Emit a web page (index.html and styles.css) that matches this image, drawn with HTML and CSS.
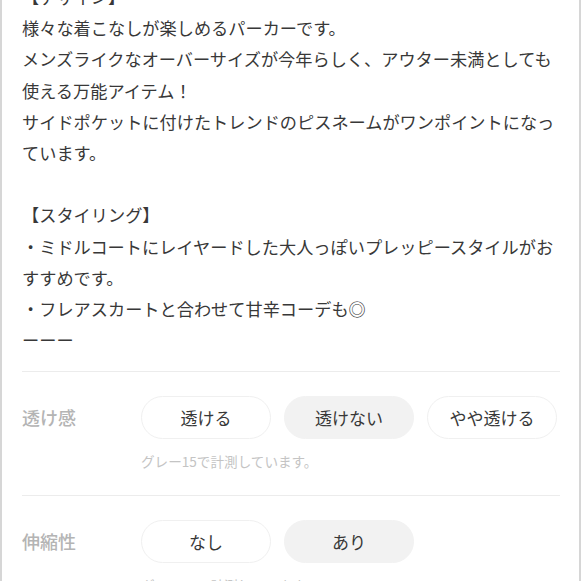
FILE: index.html
```html
<!DOCTYPE html>
<html lang="ja">
<head>
<meta charset="utf-8">
<link rel="stylesheet" href="styles.css">
</head>
<body>
<div class="panel">
  <div class="desc">
    <p>【デザイン】</p>
    <p>様々な着こなしが楽しめるパーカーです。</p>
    <p>メンズライクなオーバーサイズが今年らしく、アウター未満としても使える万能アイテム！</p>
    <p>サイドポケットに付けたトレンドのピスネームがワンポイントになっています。</p>
    <p class="blank">&nbsp;</p>
    <p>【スタイリング】</p>
    <p>・ミドルコートにレイヤードした大人っぽいプレッピースタイルがおすすめです。</p>
    <p>・フレアスカートと合わせて甘辛コーデも◎</p>
    <p>ーーー</p>
  </div>
  <div class="spec">
    <div class="spec-label">透け感</div>
    <div class="spec-body">
      <div class="pills">
        <span class="pill">透ける</span>
        <span class="pill is-on">透けない</span>
        <span class="pill">やや透ける</span>
      </div>
      <p class="note">グレー15で計測しています。</p>
    </div>
  </div>
  <div class="spec">
    <div class="spec-label">伸縮性</div>
    <div class="spec-body">
      <div class="pills">
        <span class="pill">なし</span>
        <span class="pill is-on">あり</span>
      </div>
      <p class="note">グレー15で計測しています。</p>
    </div>
  </div>
</div>
</body>
</html>
```
FILE: styles.css
```css
html, body {
  margin: 0;
  padding: 0;
  background: #ffffff;
  overflow: hidden;
}
body {
  font-family: "Noto Sans CJK JP", "Noto Sans", sans-serif;
  color: #383838;
}
.panel {
  box-sizing: border-box;
  width: 581px;
  height: 581px;
  border-left: 2px solid #d6d6d6;
  border-right: 2px solid #d6d6d6;
  padding: 0 19px 0 20px;
  overflow: hidden;
}
.desc {
  margin-top: -19px;
  font-size: 17.2px;
  line-height: 31.2px;
  padding-bottom: 16px;
  border-bottom: 1px solid #ececec;
}
.desc p {
  margin: 0;
}
.spec {
  display: flex;
  padding: 24px 0 24px;
  border-bottom: 1px solid #ececec;
}
.spec-label {
  width: 119px;
  flex: none;
  height: 43px;
  line-height: 43px;
  font-size: 18px;
  font-weight: 500;
  color: #b4b4b4;
}
.spec-body {
  display: flex;
  flex-direction: column;
}
.pills {
  display: flex;
  gap: 13px;
}
.pill {
  box-sizing: border-box;
  width: 130px;
  height: 43px;
  border-radius: 22px;
  border: 1px solid #f0f0f0;
  background: #ffffff;
  display: flex;
  align-items: center;
  justify-content: center;
  font-size: 17px;
  color: #383838;
}
.pill.is-on {
  background: #f2f2f2;
  border-color: #f2f2f2;
}
.note {
  margin: 12px 0 0;
  font-size: 13.6px;
  line-height: 20px;
  color: #c4c4c4;
}
```
